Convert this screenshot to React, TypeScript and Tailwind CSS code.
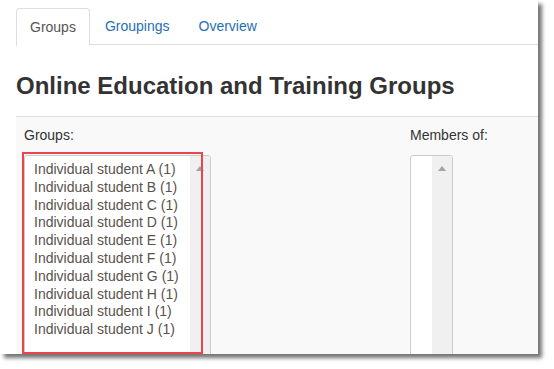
import React from "react";

const students = ["A", "B", "C", "D", "E", "F", "G", "H", "I", "J"];

function ScrollTrack() {
  return (
    <div className="w-[20px] shrink-0 bg-[#f0f0f0] flex justify-center pt-[10px]">
      <svg width="8" height="5" viewBox="0 0 8 5">
        <path d="M0 5 L4 0 L8 5 Z" fill="#a3a3a3" />
      </svg>
    </div>
  );
}

export default function App() {
  return (
    <div
      className="w-[554px] h-[369px] bg-white"
      style={{ fontFamily: '"Liberation Sans", Arial, sans-serif' }}
    >
      <div className="relative w-[538px] h-[354px] overflow-hidden bg-white shadow-[4px_4px_4px_rgba(0,0,0,0.55)]">
        {/* Tabs */}
        <div className="pt-2 pl-4">
          <div className="flex border-b border-[#dddddd] h-[37px] text-[14px]">
            <div className="h-[38px] px-[13px] flex items-center border border-[#dddddd] border-b-white rounded-t-[4px] bg-white text-[#555555]">
              Groups
            </div>
            <div className="h-[37px] px-[15px] flex items-center text-[#1f6fb5]">Groupings</div>
            <div className="h-[37px] px-[14px] flex items-center text-[#1f6fb5]">Overview</div>
          </div>
        </div>

        {/* Heading */}
        <h2 className="pl-4 pt-[26px] pb-[15px] text-[24px] leading-[30px] font-bold text-[#333333]">
          Online Education and Training Groups
        </h2>

        {/* Form area */}
        <div className="ml-4 border-t border-[#dddddd] bg-[#f9f9f9] h-[300px] flex">
          <div className="w-[394px] pl-[8px] pt-[9px]">
            <div className="text-[14px] leading-[18px] text-[#333333]">Groups:</div>
            <div className="mt-[11px] w-[187px] h-[220px] border border-[#cccccc] rounded-[3px] bg-white flex overflow-hidden">
              <div className="flex-1 pt-[5px] pl-[9px] text-[14px] leading-[17.8px] text-[#5a524c]">
                {students.map((s) => (
                  <div key={s}>Individual student {s} (1)</div>
                ))}
              </div>
              <ScrollTrack />
            </div>
          </div>
          <div className="pt-[9px]">
            <div className="text-[14px] leading-[18px] text-[#333333]">Members of:</div>
            <div className="mt-[11px] w-[43px] h-[220px] border border-[#cccccc] rounded-[3px] bg-white flex overflow-hidden">
              <div className="flex-1" />
              <ScrollTrack />
            </div>
          </div>
        </div>

        {/* Red highlight */}
        <div className="absolute left-[22px] top-[152px] w-[181px] h-[202px] border-2 border-[#e8464a]" />
      </div>
    </div>
  );
}
